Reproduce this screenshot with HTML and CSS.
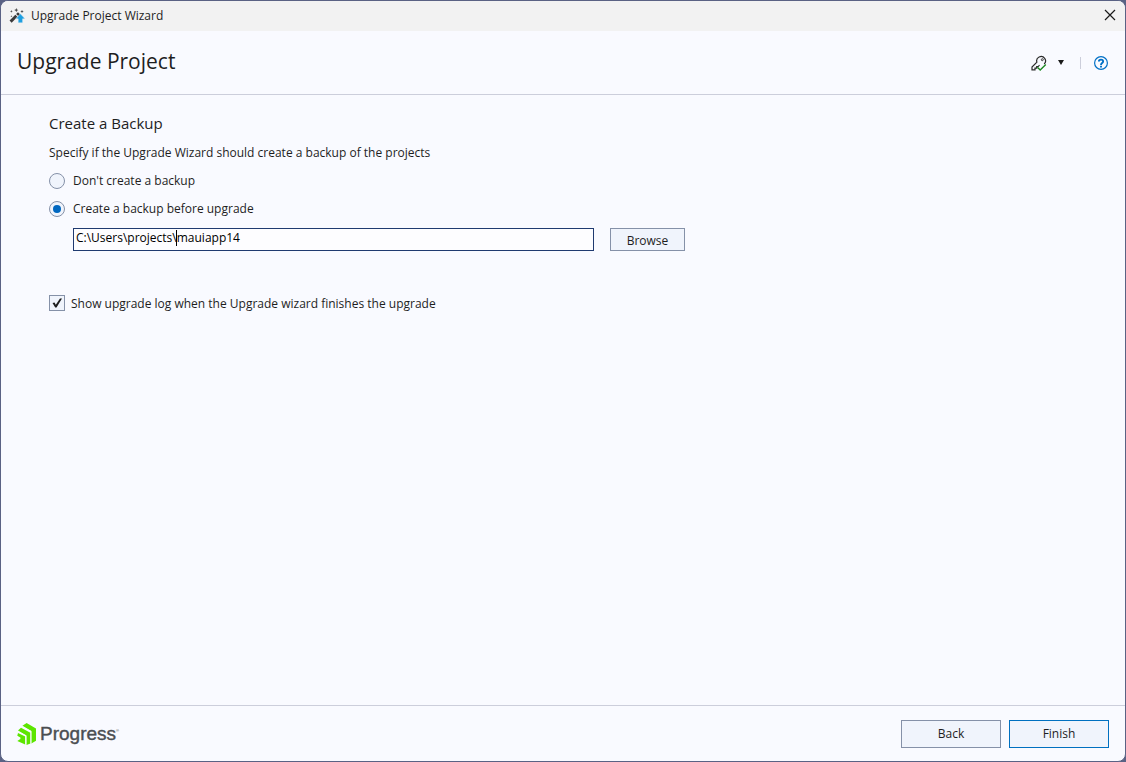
FILE: index.html
```html
<!DOCTYPE html>
<html lang="en">
<head>
    <meta charset="UTF-8">
    <title>Upgrade Project Wizard</title>
    <link rel="stylesheet" href="styles.css">
</head>
<body>

<div class="window">
    <div class="titlebar">
        <svg class="app-icon" width="16" height="16" viewBox="0 0 16 16">
            <path d="M1.6 13.6 L7.4 7.8" stroke="#3a3a3a" stroke-width="3"/>
            <path d="M8.2 7 L10 5.2" stroke="#3a3a3a" stroke-width="3"/>
            <path d="M7.3 0l.6 1.5 1.5.6-1.5.6-.6 1.5-.6-1.5-1.5-.6 1.5-.6zM2.4 2l.4 1 1 .4-1 .4-.4 1-.4-1-1-.4 1-.4zM13 1.8l.5 1.2 1.2.5-1.2.5-.5 1.2-.5-1.2-1.2-.5 1.2-.5zM2.4 7.2l.3.7.7.3-.7.3-.3.7-.3-.7-.7-.3.7-.3z" fill="#444"/>
            <path d="M11.4 5.8l4.6 5h-2.4v4H9.200v-4H6.800z" fill="#1e9fe0" stroke="#f2f2f2" stroke-width=".4"/>
        </svg>
        <span class="window-title">Upgrade Project Wizard</span>
        <button class="icon-button close" type="button" aria-label="Close">
            <svg width="12" height="12" viewBox="0 0 12 12">
                <path d="M1 1l10 10M11 1L1 11" stroke="#1a1a1a" stroke-width="1.2"/>
            </svg>
        </button>
    </div>

    <header class="header">
        <h1>Upgrade Project</h1>
        <div class="tools">
            <button class="icon-button license" type="button" aria-label="License">
                <svg width="16" height="16" viewBox="0 0 16 16" fill="none">
                    <path d="M13.2 9A4.400 4.400 0 1 0 5.900 7.200L1 12.100v2.800h3v-1.700h1.700v-1.700h1.600l1.200-1.500" stroke="#2b2b2b" stroke-width="1.2"/>
                    <circle cx="11.300" cy="4.700" r="1" stroke="#2b2b2b" stroke-width=".9"/>
                    <path d="M6.400 12.200l2.800 2.700 5.600-5.500" stroke="#1f8a24" stroke-width="1.4"/>
                </svg>
                <svg width="6" height="5" viewBox="0 0 6 5">
                    <path d="M0 0h6L3 5z" fill="#1a1a1a"/>
                </svg>
            </button>
            <span class="divider"></span>
            <button class="icon-button help" type="button" aria-label="Help">
                <svg width="14" height="14" viewBox="0 0 14 14" fill="none" stroke="#0070c6">
                    <circle cx="7" cy="7" r="6.4" stroke-width="1.2"/>
                    <path d="M4.900 5.500C4.900 3 9.200 3 9.100 5.400 9.100 7 7 6.900 7 8.900" stroke-width="1.9"/>
                    <path d="M7 9.700v1.800" stroke-width="1.9"/>
                </svg>
            </button>
        </div>
    </header>

    <main class="content">
        <h2>Create a Backup</h2>
        <p class="description" id="backupText">Specify if the Upgrade Wizard should create a backup of the projects</p>

        <div class="options" role="radiogroup" aria-labelledby="backupText">
            <label class="option">
                <input type="radio" name="backup" value="none">
                Don't create a backup
            </label>
            <label class="option">
                <input type="radio" name="backup" value="create" checked>
                Create a backup before upgrade
            </label>
        </div>

        <div class="path-row">
            <div class="path-field">
                <input type="text" id="backupPath" aria-label="Backup path" value="C:\Users\projects\mauiapp14" spellcheck="false">
                <span class="caret"></span>
            </div>
            <button class="button browse" type="button">Browse</button>
        </div>

        <label class="option log-option">
            <input type="checkbox" checked>
            <span>Show upgrade log when the Upgrade wizard finishes the upgrade</span>
        </label>
    </main>

    <footer class="footer">
        <div class="brand">
            <svg width="19" height="22" viewBox="0 0 19 22" fill="#5ce500">
                <path d="M9.600 0L19 5.400v12.300l-4.600 2.700V8L5.400 2.700z"/>
                <path d="M4 4.700l9.400 5.100v10.800l-3.900 1.400v-9.500L1 7.400z"/>
                <path d="M1 10l7.200 3.500v8L.3 18l3.100-2v-1.500L.3 12.700z"/>
                <path d="M13.900 20.500V8.300L4.700 3.200M8.800 21.500v-8.800L1 8.500" fill="none" stroke="#f9faff" stroke-width=".8"/>
            </svg>
            <span class="brand-name">Progress<sup>®</sup></span>
        </div>
        <div class="actions">
            <button class="button" type="button">Back</button>
            <button class="button primary" type="button">Finish</button>
        </div>
    </footer>
</div>

</body>
</html>
```
FILE: styles.css
```css
* {
    box-sizing: border-box;
}
body {
    margin: 0;
    background: #5a6284;
    color: #1e1e1e;
    font-family: "Open Sans", "Segoe UI", sans-serif;
    font-size: 12px;
    line-height: 16px;
}
.window {
    display: flex;
    flex-direction: column;
    min-height: 100vh;
    border: 1px solid #5a6284;
    border-radius: 8px;
    background: #f9faff;
    overflow: hidden;
}
.titlebar {
    display: flex;
    align-items: center;
    height: 30px;
    padding: 0 8px;
    background: #f2f2f2;
}
.window-title {
    flex: 1;
    margin-left: 6px;
}
.icon-button {
    display: flex;
    align-items: center;
    padding: 0;
    border: none;
    background: none;
}
.close {
    padding: 0 1px 2px;
}
.header {
    display: flex;
    align-items: center;
    justify-content: space-between;
    height: 64px;
    padding: 0 17px 0 16px;
    border-bottom: 1px solid #cccedb;
}
h1, h2, p {
    margin: 0;
    font-weight: normal;
}
h1 {
    padding-bottom: 4px;
    font-size: 21px;
    line-height: 30px;
}
.tools {
    display: flex;
    align-items: center;
}
.license {
    gap: 11px;
}
.divider {
    width: 1px;
    height: 12px;
    margin: 0 13px 0 16px;
    background: #cccedb;
}
.content {
    flex: 1;
    padding: 18px 48px;
}
h2 {
    font-size: 15px;
    line-height: 20px;
}
.description {
    margin-top: 12px;
}
.options {
    display: flex;
    flex-direction: column;
    gap: 12px;
    margin-top: 12px;
}
.option {
    display: flex;
    align-items: center;
    gap: 8px;
}
input[type="radio"],
input[type="checkbox"] {
    appearance: none;
    display: grid;
    place-content: center;
    width: 16px;
    height: 16px;
    margin: 0;
    border: 1px solid #8591a8;
    background: #f0f4fc;
}
input[type="radio"] {
    border-radius: 50%;
}
input[type="radio"]:checked::before {
    content: "";
    width: 8px;
    height: 8px;
    border-radius: 50%;
    background: #0067c0;
}
input[type="checkbox"]:checked::before {
    content: "";
    width: 10px;
    height: 10px;
    background: #1e1e1e;
    clip-path: polygon(5% 50%, 25% 45%, 38% 68%, 80% 5%, 100% 5%, 45% 95%, 32% 95%);
}
.path-row {
    display: flex;
    align-items: center;
    gap: 16px;
    margin: 11px 0 0 24px;
}
.path-field {
    position: relative;
    flex: 0 1 521px;
}
input[type="text"] {
    display: block;
    width: 100%;
    height: 23px;
    padding: 0 2px 4px;
    border: 1px solid #1f3a70;
    background: #fdfdff;
    color: #000;
    font: inherit;
    outline: none;
}
.caret {
    position: absolute;
    top: 2px;
    left: 103px;
    width: 1px;
    height: 16px;
    background: #000;
}
.button {
    width: 100px;
    height: 28px;
    padding: 0;
    border: 1px solid #8591a8;
    background: #f0f4fc;
    color: #1e1e1e;
    font: inherit;
}
.button.browse {
    width: 75px;
    height: 23px;
    padding-top: 2px;
}
.button.primary {
    border-color: #0070c0;
}
.log-option {
    align-items: flex-start;
    gap: 6px;
    margin-top: 44px;
}
.log-option span {
    padding-top: 1px;
}
.footer {
    display: flex;
    align-items: center;
    justify-content: space-between;
    height: 56px;
    padding: 0 16px;
    border-top: 1px solid #cccedb;
}
.brand {
    display: flex;
    align-items: center;
    gap: 4px;
}
.brand-name {
    color: #4b4e52;
    font-family: "Liberation Sans", Arial, sans-serif;
    font-size: 19px;
    line-height: 24px;
    -webkit-text-stroke: 0.4px #4b4e52;
}
.brand-name sup {
    font-size: 4px;
    line-height: 0;
    vertical-align: 8px;
    -webkit-text-stroke: 0;
}
.actions {
    display: flex;
    gap: 8px;
}
```
